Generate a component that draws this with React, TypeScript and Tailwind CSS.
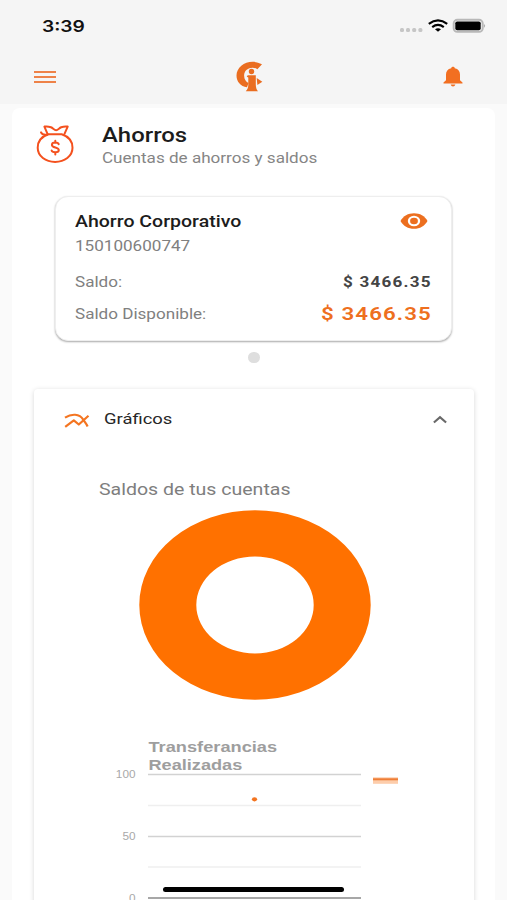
import React from "react";

const HEADER_ORANGE = "#f26f21";

function StatusBar() {
  return (
    <div className="flex h-[52px] items-center justify-between pl-[42px] pr-[21px]">
      <span className="inline-block origin-left scale-x-[1.2] font-['Inter',sans-serif] text-[16px] leading-none font-semibold text-[#111]">
        3:39
      </span>
      <svg width="88" height="16" viewBox="0 0 88 16">
        <g fill="#c6c6c6">
          <rect x="2" y="10" width="4" height="4" rx="1.5" />
          <rect x="8" y="10" width="4" height="4" rx="1.5" />
          <rect x="14.2" y="10" width="4" height="4" rx="1.5" />
          <rect x="20.4" y="10" width="4" height="4" rx="1.5" />
        </g>
        <g fill="none" stroke="#000" strokeWidth="2.2">
          <path d="M30.8 5.8Q40 -1 49.2 5.8" />
          <path d="M34.2 9.1Q40 4.7 45.8 9.1" />
        </g>
        <path d="M37 11.3Q40 9 43 11.3L40 13.8Z" />
        <rect x="55.7" y="1.8" width="29" height="12" rx="3.6" fill="none" stroke="#b8b8b8" strokeWidth="2" />
        <rect x="57.3" y="3.4" width="25.4" height="8.9" rx="1.8" />
        <path d="M86 6Q88.2 7.8 86 9.8Z" fill="#aaa" />
      </svg>
    </div>
  );
}

function NavBar() {
  return (
    <div className="flex h-[50px] items-center justify-between pr-[44px] pl-[34px]">
      <div className="flex w-[22px] flex-col gap-[3px]">
        <div className="h-[2px] bg-[#ee8248]" />
        <div className="h-[2px] bg-[#ee8248]" />
        <div className="h-[2px] bg-[#ee8248]" />
      </div>
      <svg width="28" height="32" viewBox="0 0 28 32" fill="#ea6d20">
        <path d="M26 3.3 21.4 8.2C16.5 4.8 8.2 7.3 8.1 14.5c0 3.9 2 6.5 4.5 7.4L11 26.3C4.5 25.5.5 20.5.5 14.5.5 4.5 14-3.3 26 3.3Z" />
        <circle cx="15.5" cy="10.5" r="2.7" />
        <path d="M11.7 14.2h8.1v9.5c.1 2.8.7 4.7 2.2 6.6H9.8c1.8-2 2.5-4 2.5-6.6V16.5l-1.6-.7Z" />
        <path d="m20.7 17 5.6 3.7-4.9 3.4Z" />
      </svg>
      <svg width="20" height="22" viewBox="0 0 20 22" fill={HEADER_ORANGE}>
        <path d="M8.2 2.3C8.2.3 11.8.3 11.8 2.3 15.3 3 17 5.4 17 8.6v5.6l2.5 2.2v1H.5v-1L3 14.2V8.6c0-3.2 1.7-5.6 5.2-6.3Z" />
        <path d="M7.6 18.6h4.8q-.6 1.9-2.4 1.9t-2.4-1.9Z" />
      </svg>
    </div>
  );
}

function SectionTitle() {
  return (
    <div className="flex pl-[24px] pt-[16px]">
      <svg width="40" height="40" viewBox="0 0 40 40" fill="none" stroke="#f4511e" strokeWidth="2" strokeLinecap="round" strokeLinejoin="round">
        <path d="M12.5 10.2C5.5 12.5 1.7 17.8 1.7 23.7c0 8.5 8 14.2 17.4 14.2s17.4-5.7 17.4-14.2c0-5.9-3.8-11.2-10.8-13.5Z" />
        <path d="M11.5 9.9 8.4 2.6c3.3-.6 5 .1 6.600.7 2 .8 3.200 3 5.100 3s3.100-2.200 5.100-3c2-.8 3.500-1.300 6.500-.7L28.500 9.900" />
        <path d="M11.500 10.500c-3.200.6-5.300.6-6.500-2.200" />
        <path d="M22.7 20.3c-.4-2.2-6.8-2.5-6.8.6 0 3.2 6.9 2 6.9 5.200 0 3-6.700 2.800-7.200.3M19.3 16.7v2M19.3 28.6v2" />
      </svg>
      <div className="ml-[26px] pt-[2px]">
        <h1 className="flex h-[20px] origin-left scale-x-[1.22] items-center text-[19.6px] leading-none font-medium text-[#1c1c1c]">Ahorros</h1>
        <p className="mt-[2px] flex h-[20px] origin-left scale-x-[1.22] items-center text-[14px] leading-none text-[#858585]">Cuentas de ahorros y saldos</p>
      </div>
    </div>
  );
}

function AccountCard() {
  return (
    <div className="mx-[43px] mt-[28px] h-[145px] rounded-[13px] border border-[#eeeeee] bg-white pr-[19px] pl-[19px] pt-[14px] shadow-[0_1px_2px_rgba(0,0,0,0.34)]">
      <div className="flex h-[22px] items-center justify-between">
        <h2 className="origin-left scale-x-[1.22] text-[16px] leading-none font-medium whitespace-nowrap text-[#1c1c1c]">Ahorro Corporativo</h2>
        <svg width="28" height="18" viewBox="0 0 28 18" className="mr-[4px] mb-[2px]">
          <path d="M.5 9C3.2 3.9 8.2 1.2 14 1.2S24.8 3.9 27.5 9C24.8 14.1 19.8 16.8 14 16.8S3.2 14.1.5 9Z" fill="#ec6f1f" />
          <ellipse cx="14" cy="9" rx="6.2" ry="5.2" fill="#fff" />
          <ellipse cx="14" cy="9" rx="3.9" ry="3.2" fill="#ec6f1f" />
        </svg>
      </div>
      <p className="mt-[3px] flex h-[20px] origin-left scale-x-[1.22] items-center text-[14px] leading-none text-[#808080]">150100600747</p>
      <div className="mt-[16px] flex h-[20px] items-center justify-between text-[14px] leading-none">
        <span className="origin-left scale-x-[1.22] text-[#808080]">Saldo:</span>
        <span className="origin-right scale-x-[1.22] font-bold tracking-[1px] text-[#444]">$ 3466.35</span>
      </div>
      <div className="mt-[11px] flex h-[22px] items-center justify-between leading-none">
        <span className="origin-left scale-x-[1.22] text-[14px] text-[#808080]">Saldo Disponible:</span>
        <span className="origin-right scale-x-[1.22] text-[18.3px] font-semibold tracking-[0.9px] text-[#ee6f20]">$ 3466.35</span>
      </div>
    </div>
  );
}

function ChartsPanel() {
  return (
    <div className="mx-[21.5px] mt-[26px] h-[560px] rounded-[4px] bg-white shadow-[0_1px_5px_rgba(0,0,0,0.16)]">
      <div className="flex h-[60px] items-center pr-[27px] pl-[30.5px]">
        <svg width="26" height="16" viewBox="0 0 26 16" fill="none" stroke="#f47521" strokeWidth="2.2" strokeLinejoin="round" className="mt-[4px]">
          <path d="M1 4.6C7.5.5 15.5.5 19.2 6.6 21 9.5 22.5 11 23.6 13.5" />
          <path d="M1.2 13.8 9.8 7.3l5 4.2L24.5 2.7" />
        </svg>
        <span className="ml-[14px] origin-left scale-x-[1.22] pt-[1px] text-[15.1px] leading-none text-[#262626]">Gráficos</span>
        <svg width="14" height="9" viewBox="0 0 14 9" fill="none" stroke="#696969" strokeWidth="2.2" className="ml-auto">
          <path d="m.9 7.5 6.1-5.3 6.1 5.3" />
        </svg>
      </div>
      <p className="ml-[65.5px] mt-[28px] flex h-[24px] origin-left scale-x-[1.22] items-center pt-[1px] text-[16px] leading-none text-[#7e7e7e]">Saldos de tus cuentas</p>
      <svg width="232" height="190" viewBox="0 0 232 190" className="mt-[8.5px] ml-[105px]">
        <path fillRule="evenodd" fill="#ff7100" d="M.3 95a115.7 94.7 0 1 0 231.4 0a115.7 94.7 0 1 0-231.4 0ZM57.3 95a58.7 48.4 0 1 1 117.400 0a58.7 48.400 0 1 1-117.400 0Z" />
      </svg>
      <svg width="300" height="175" viewBox="110 730 300 175" className="mt-[30.5px] ml-[76.5px] font-['Liberation_Sans',Arial,sans-serif]">
        <path d="M148 774.5h213M148 836.5h213" stroke="#d2d2d2" strokeWidth="1.3" />
        <path d="M148 805.5h213M148 867h213" stroke="#efefef" strokeWidth="1.3" />
        <path d="M148 898h213" stroke="#8a8a8a" strokeWidth="1.6" />
        <g fill="#9e9e9e" fontWeight="700" fontSize="15">
          <text transform="translate(148.5 752) scale(1.18 1)" textLength="109" lengthAdjust="spacingAndGlyphs">Transferancias</text>
          <text transform="translate(148.5 770) scale(1.18 1)" textLength="79.5" lengthAdjust="spacingAndGlyphs">Realizadas</text>
        </g>
        <g fill="#a9a9a9" fontSize="10" textAnchor="end">
          <text transform="translate(135.5 778) scale(1.18 1)">100</text>
          <text transform="translate(135.5 840) scale(1.18 1)">50</text>
          <text transform="translate(135.5 901.5) scale(1.18 1)">0</text>
        </g>
        <ellipse cx="254.5" cy="799.3" rx="2.6" ry="2.1" fill="#f37420" />
        <rect x="373" y="777.3" width="25" height="6.5" fill="#fdcdab" />
        <rect x="373" y="778.3" width="25" height="2" fill="#ee7d36" />
      </svg>
    </div>
  );
}

export default function App() {
  return (
    <div className="relative h-[900px] w-[507px] overflow-hidden bg-[#fafafa] font-['Roboto',sans-serif]">
      <header className="h-[104px] bg-[#f5f5f5]">
        <StatusBar />
        <NavBar />
      </header>
      <main className="mx-[12px] mt-[4px] h-[860px] rounded-[8px] bg-white">
        <SectionTitle />
        <AccountCard />
        <div className="mx-auto mt-[11px] h-[11px] w-[12px] rounded-full bg-[#dedede]" />
        <ChartsPanel />
      </main>
      <div className="absolute bottom-[8px] left-[163px] h-[5px] w-[181px] rounded-full bg-black" />
    </div>
  );
}
